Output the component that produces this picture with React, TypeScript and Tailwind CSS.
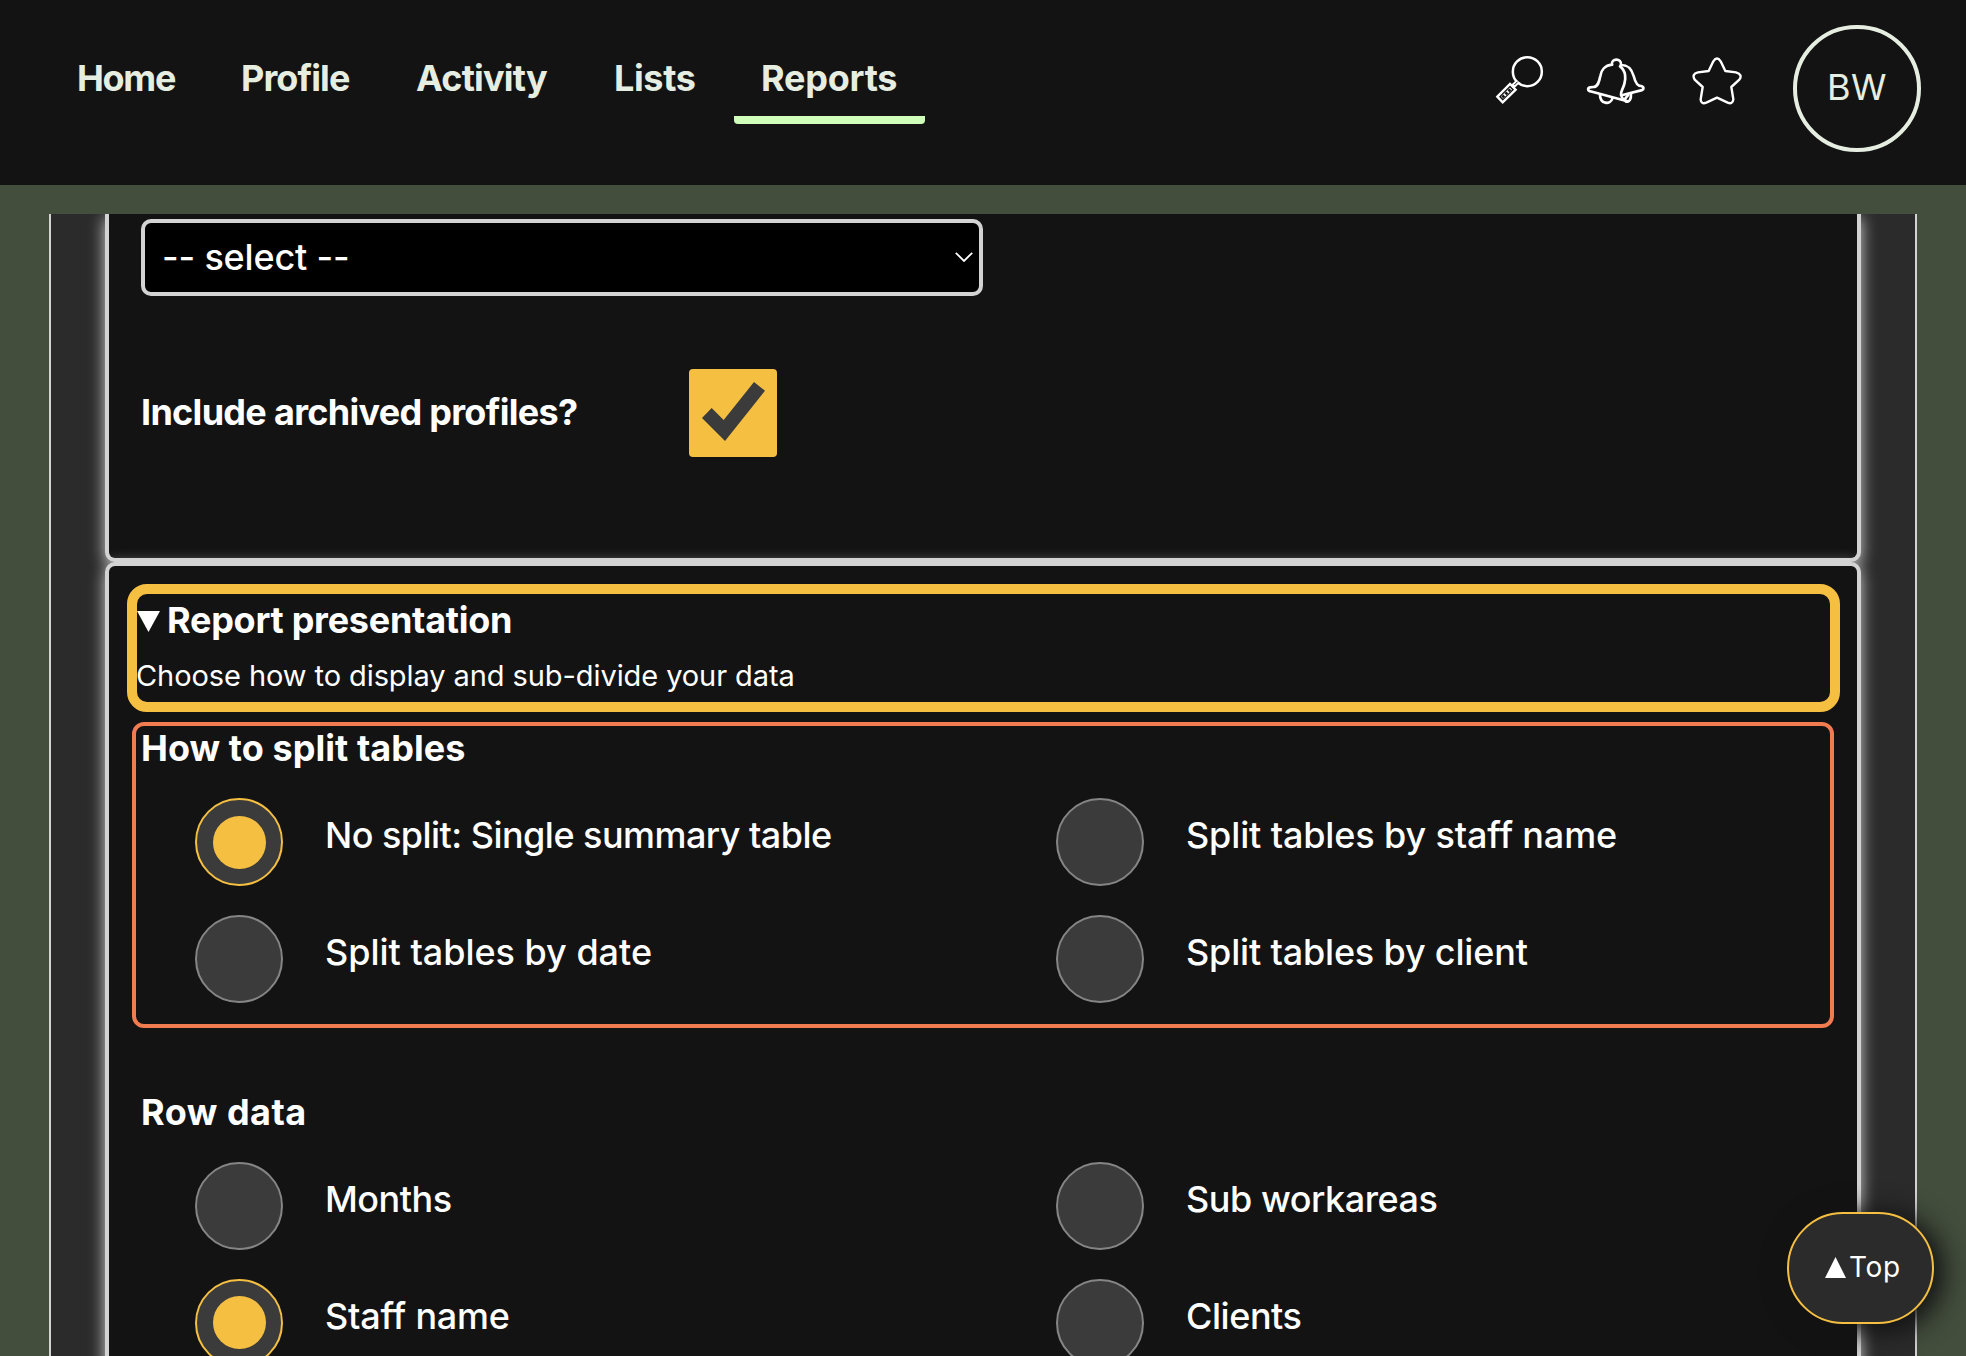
import React from "react";

type Option = { label: string; tracking: string; checked?: boolean };

const tabs = [
  { label: "Home", cls: "w-[164px] tracking-[-1.3px]" },
  { label: "Profile", cls: "w-[175px] tracking-[-0.89px]" },
  { label: "Activity", cls: "w-[198px] tracking-[-0.8px]" },
  { label: "Lists", cls: "w-[147px] tracking-[-0.37px]" },
  { label: "Reports", cls: "w-[191px] tracking-[-0.23px]", active: true },
];

const splitOptions: Option[] = [
  { label: "No split: Single summary table", tracking: "tracking-[-0.54px]", checked: true },
  { label: "Split tables by staff name", tracking: "tracking-[-0.14px]" },
  { label: "Split tables by date", tracking: "tracking-[-0.02px]" },
  { label: "Split tables by client", tracking: "tracking-[-0.18px]" },
];

const rowOptions: Option[] = [
  { label: "Months", tracking: "tracking-[-0.5px]" },
  { label: "Sub workareas", tracking: "tracking-[-0.45px]" },
  { label: "Staff name", tracking: "tracking-[-0.2px]", checked: true },
  { label: "Clients", tracking: "tracking-[-0.45px]" },
];

function SearchIcon() {
  return (
    <svg viewBox="45 45 150 150" className="h-[50px] w-[50px]" fill="none" stroke="#fff">
      <circle cx="142" cy="95" r="43.5" strokeWidth="7.5" />
      <path d="M114 124 L98 140" strokeWidth="14" />
      <path d="M113 125 L103 135" stroke="#131313" strokeWidth="3" />
      <path d="M52 170 L90 132 L107 149 L68 187 Z" strokeWidth="7" />
      <path d="M66 173 L93 146" strokeWidth="9" />
      <path d="M67 172 L94 145" stroke="#131313" strokeWidth="8" strokeDasharray="8 5" />
    </svg>
  );
}

function BellIcon() {
  return (
    <svg viewBox="45 45 186 150" className="ml-10 h-[50px] w-[62px]" fill="none" stroke="#fff" strokeWidth="8" strokeLinecap="round" strokeLinejoin="round">
      <path d="M126 74 C122 54 156 53 153 75" />
      <path d="M126 74 C104 76 93 92 91 108 C87 128 83 141 70 141 L60 142 C52 144 53 153 61 154 L172 184" />
      <path d="M150 79 C168 92 168 116 163 132 C158 149 152 153 153 165 C156 176 162 181 172 184" />
      <path d="M153 75 C178 75 186 90 191 108 C196 128 202 139 214 138 C223 141 222 149 213 151 L158 165" />
      <path d="M90 164 C90 193 121 195 127 176" />
      <path d="M183 161 C184 178 178 186 168 185 M166 175 L174 166" />
    </svg>
  );
}

function StarIcon() {
  return (
    <svg viewBox="360 45 156 150" className="ml-[43px] h-[50px] w-[52px]" fill="none" stroke="#fff" strokeWidth="7.2" strokeLinejoin="round">
      <path d="M430 64 Q441 47 452 64 L466 93 L498 97 Q519 103 508 119 L484 141 L490 178 Q488 194 473 188 L441 173 L409 188 Q393 194 392 178 L398 141 L374 119 Q364 102 384 97 L416 93 Z" />
    </svg>
  );
}

function Radio({ label, tracking, checked }: Option) {
  return (
    <label className="flex items-start">
      <span
        className={
          "flex h-[88px] w-[88px] shrink-0 items-center justify-center rounded-full border-2 bg-[#3b3b3b] " +
          (checked ? "border-[#f5bf42]" : "border-[#858585]")
        }
      >
        {checked && <span className="h-[53px] w-[53px] rounded-full bg-[#f5bf42]" />}
      </span>
      <span className={"mt-[17px] ml-[42px] text-[36px] leading-[40px] font-medium whitespace-nowrap " + tracking}>{label}</span>
    </label>
  );
}

function RadioGroup({ title, titleTracking, options, frame }: { title: string; titleTracking: string; options: Option[]; frame: string }) {
  return (
    <section className={"ml-[23px] h-[306px] w-[1702px] rounded-[12px] border-4 pt-[2px] pl-[5px] " + frame}>
      <h3 className={"text-[36px] leading-[40px] font-bold " + titleTracking}>{title}</h3>
      <div className="mt-[30px] grid grid-cols-[861px_1fr] gap-y-[28.5px] pl-[54px]">
        {options.map((o) => (
          <Radio key={o.label} {...o} />
        ))}
      </div>
    </section>
  );
}

export default function App() {
  return (
    <div className="relative flex h-[1356px] w-[1966px] flex-col overflow-hidden bg-[#434e3d] font-['Inter',sans-serif] text-white">
      <header className="flex h-[185px] shrink-0 items-start bg-[#131313] pr-[45px] pl-[50px] text-[#e6eee2]">
        <nav className="flex">
          {tabs.map((t) => (
            <a
              key={t.label}
              className={
                "h-[124px] rounded-b-[4px] border-b-8 pt-[58px] pl-[27px] text-[36px] leading-[40px] font-bold " +
                t.cls +
                (t.active ? " border-[#cfffbb]" : " border-transparent")
              }
            >
              {t.label}
            </a>
          ))}
        </nav>
        <div className="ml-auto flex pt-[55px]">
          <SearchIcon />
          <BellIcon />
          <StarIcon />
        </div>
        <div className="mt-[25px] ml-[51px] flex h-[127px] w-[128px] items-center justify-center rounded-full border-4 border-[#e6eee2] pb-[3px] text-[36px] leading-[40px] tracking-[0.45px]">
          BW
        </div>
      </header>

      <main className="mx-[49px] mt-[29px] h-[1142px] overflow-hidden border-x-2 border-[#d3d3d3] bg-[#2b2b2b] px-[54px]">
        <section className="h-[348px] rounded-b-[10px] border-x-4 border-b-4 border-[#d3d3d3] bg-[#131313] pt-[5px] pl-[32px] shadow-[0_4px_16px_#d3d3d3]">
          <div className="flex h-[77px] w-[842px] items-center justify-between rounded-[10px] border-4 border-[#d3d3d3] bg-black pr-[6px] pl-[17px]">
            <span className="pb-[2px] text-[36px] leading-[40px] font-medium tracking-[-0.17px]">-- select --</span>
            <svg viewBox="0 0 18 10" className="mb-px h-[10px] w-[18px]" fill="none" stroke="#fff" strokeWidth="1.8">
              <path d="M0.8 0.8 L9 9 L17.2 0.8" />
            </svg>
          </div>
          <div className="mt-[73px] flex h-[88px] items-center">
            <span className="w-[548px] pb-[2px] text-[36px] leading-[40px] font-bold tracking-[-0.7px]">Include archived profiles?</span>
            <svg viewBox="267 87 264 264" className="h-[88px] w-[88px] rounded-[4px] bg-[#f5bf42]">
              <path d="M306 234 L335 204 L371 240 L462 126 L495 152 L375 303 Z" fill="#3b3b3b" />
            </svg>
          </div>
        </section>

        <section className="h-[900px] rounded-[10px] border-4 border-[#d3d3d3] bg-[#131313] pt-[18px] shadow-[0_4px_16px_#d3d3d3]">
          <div className="mr-[17px] ml-[18px] h-[128px] rounded-[20px] border-[10px] border-[#f5bf42] pt-[6px]">
            <div className="flex items-start">
              <svg viewBox="0 0 23 21" className="mt-[11px] h-[21px] w-[23px]" fill="#fff">
                <path d="M0 0 H23 L11.5 21 Z" />
              </svg>
              <h2 className="ml-[7px] text-[36px] leading-[40px] font-bold tracking-[-0.26px]">Report presentation</h2>
            </div>
            <p className="mt-[18px] -ml-px text-[29px] leading-[36px] tracking-[-0.08px]">Choose how to display and sub-divide your data</p>
          </div>
          <div className="mt-[10px]">
            <RadioGroup title="How to split tables" titleTracking="tracking-[0.06px]" options={splitOptions} frame="border-[#f17c50]" />
          </div>
          <div className="mt-[58px]">
            <RadioGroup title="Row data" titleTracking="tracking-[0.49px]" options={rowOptions} frame="border-transparent" />
          </div>
        </section>
      </main>

      <button className="absolute top-[1212px] left-[1787px] flex h-[112px] w-[147px] items-center rounded-[56px] border-2 border-[#f5bf42] bg-[#2b2b2b] pb-[2px] pl-[36px] shadow-[6px_4px_26px_4px_#131313]">
        <svg viewBox="0 0 21 21" className="h-[21px] w-[21px]" fill="#fff">
          <path d="M10.5 0 L21 21 H0 Z" />
        </svg>
        <span className="ml-[3px] text-[28px] leading-[32px] tracking-[0.66px]">Top</span>
      </button>
    </div>
  );
}
